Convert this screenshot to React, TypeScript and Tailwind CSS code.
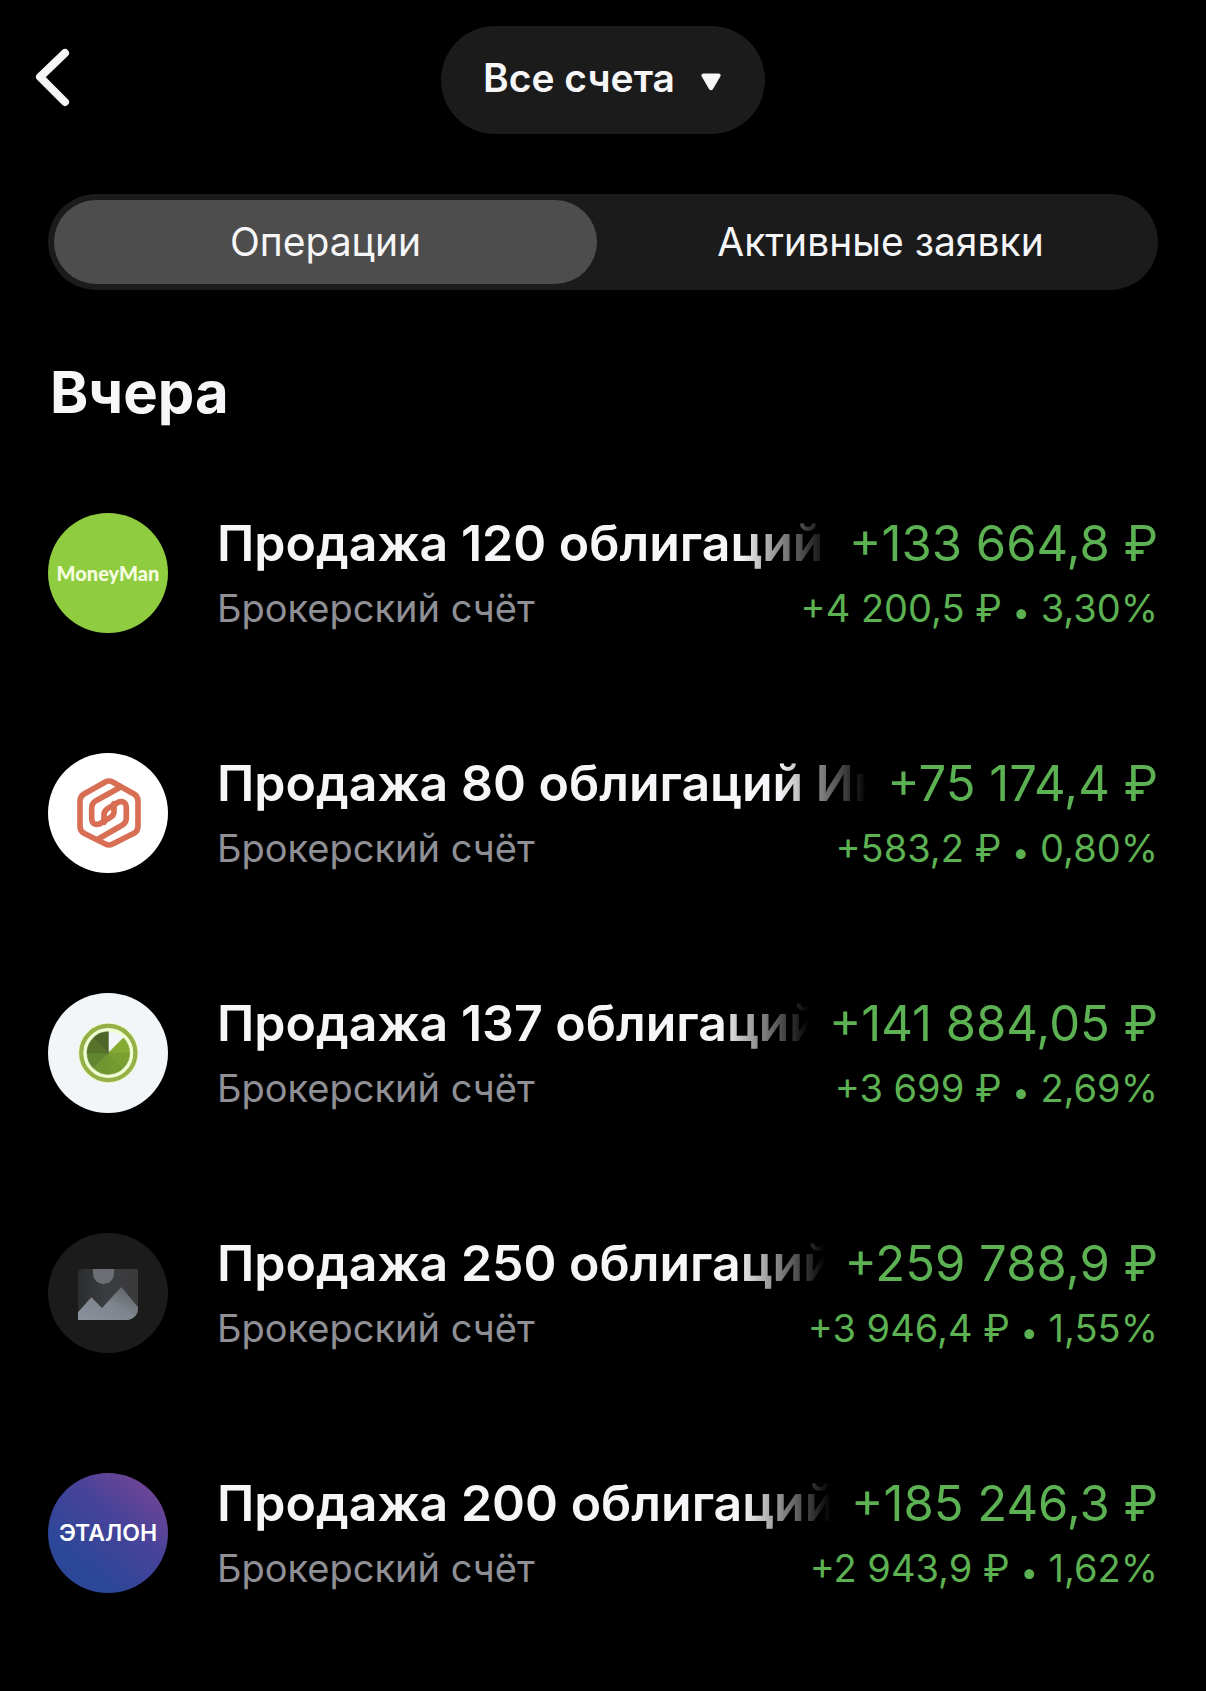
import React, { useState } from "react"

interface Operation {
  id: string;
  title: string;
  account: string;
  amount: string;
  profit: string;
  percent: string;
  logo: React.ReactNode;
}

const MoneyManLogo = () => (
  <div className="flex size-full items-center justify-center bg-[#8fcc3f]">
    <span className="font-['Lato'] text-[20px] font-black leading-none text-[#f6fde0]">MoneyMan</span>
  </div>
)

const HexagonLogo = () => (
  <svg viewBox="0 0 360 360" className="size-full bg-white" fill="none" stroke="#d86f55" strokeWidth="17" strokeLinecap="round" strokeLinejoin="round" aria-hidden="true">
    <path d="M172 87Q183 81 194 87L258 123Q270 130 270 144V220Q270 234 258 241L194 273Q183 279 172 273L108 241Q96 234 96 220V144Q96 130 108 123Z" />
    <path d="M214 104L144 143Q131 151 131 166V194Q131 219 154 213L186 194Q198 187 198 176V152" />
    <path d="M152 257L222 217Q235 209 235 194V166Q235 141 212 147L180 166Q168 173 168 184V208" />
  </svg>
)

const sectors = [
  { color: "#86ab33", angle: 45 },
  { color: "#7ba032", angle: 90 },
  { color: "#739a2f", angle: 135 },
  { color: "#6f962f", angle: 180 },
  { color: "#618530", angle: 225 },
  { color: "#567329", angle: 270 },
  { color: "#4d6627", angle: 315 },
]

const PieLogo = () => (
  <svg viewBox="0 0 360 360" className="size-full bg-[#f3f6f8]" aria-hidden="true">
    <circle cx="181" cy="180" r="90" fill="#e6f5b5" />
    <circle cx="181" cy="180" r="81" fill="#f3f6f8" stroke="#95b048" strokeWidth="13" />
    <circle cx="181" cy="180" r="70" fill="none" stroke="#efffcf" strokeWidth="9" />
    {sectors.map((sector) => (
      <path key={sector.angle} d="M181 180V116A64 64 0 0 1 226 135Z" fill={sector.color} stroke={sector.color} strokeWidth="2" transform={`rotate(${sector.angle} 181 180)`} />
    ))}
  </svg>
)

const PlaceholderLogo = () => (
  <svg viewBox="0 0 360 360" className="size-full bg-[#1b1b1c]" aria-hidden="true">
    <defs>
      <linearGradient id="sky" x1="0" y1="0" x2="1" y2="0">
        <stop offset="0" stopColor="#2b2d2f" />
        <stop offset="0.5" stopColor="#3b3d40" />
        <stop offset="1" stopColor="#3a3a3b" />
      </linearGradient>
      <linearGradient id="hills" x1="0" y1="1" x2="1" y2="0">
        <stop offset="0" stopColor="#8a919b" />
        <stop offset="0.5" stopColor="#80868f" />
        <stop offset="1" stopColor="#5a5c60" />
      </linearGradient>
    </defs>
    <path d="M106 108H270V226A34 34 0 0 1 236 261H90V124Q90 108 106 108Z" fill="url(#sky)" />
    <path d="M135 108H198V122A31 31 0 0 1 135 122Z" fill="#6b6e72" />
    <path d="M90 238L130 193L162 225L220 162L270 222V226A34 34 0 0 1 236 261H90Z" fill="url(#hills)" />
  </svg>
)

const EtalonLogo = () => (
  <div className="flex size-full items-center justify-center bg-[linear-gradient(40deg,#2c4798_25%,#47439a_60%,#7a4593_95%)]">
    <span className="font-['Inter'] text-[23px] font-semibold leading-none text-white">ЭТАЛОН</span>
  </div>
)

const account = "Брокерский счёт"

const operations: Operation[] = [
  { id: "moneyman", title: "Продажа 120 облигаций", account, amount: "+133 664,8 ₽", profit: "+4 200,5 ₽", percent: "3,30%", logo: <MoneyManLogo /> },
  { id: "hexagon", title: "Продажа 80 облигаций Ин", account, amount: "+75 174,4 ₽", profit: "+583,2 ₽", percent: "0,80%", logo: <HexagonLogo /> },
  { id: "pie", title: "Продажа 137 облигаций", account, amount: "+141 884,05 ₽", profit: "+3 699 ₽", percent: "2,69%", logo: <PieLogo /> },
  { id: "placeholder", title: "Продажа 250 облигаций", account, amount: "+259 788,9 ₽", profit: "+3 946,4 ₽", percent: "1,55%", logo: <PlaceholderLogo /> },
  { id: "etalon", title: "Продажа 200 облигаций", account, amount: "+185 246,3 ₽", profit: "+2 943,9 ₽", percent: "1,62%", logo: <EtalonLogo /> },
]

const tabs = ["Операции", "Активные заявки"]

const OperationRow: React.FC<{ operation: Operation }> = ({ operation }) => {
  return (
    <li className="flex items-start gap-[49px] py-[60px]">
      <div className="size-[120px] shrink-0 overflow-hidden rounded-full">{operation.logo}</div>
      <div className="flex h-[120px] min-w-0 flex-1 flex-col gap-1">
        <div className="flex items-baseline gap-5 text-[50px] leading-[60px]">
          <p className="min-w-0 flex-1 overflow-hidden whitespace-nowrap font-semibold [mask-image:linear-gradient(to_left,transparent,black_88px)]">{operation.title}</p>
          <p className="shrink-0 whitespace-nowrap text-[49px] text-[#5cb152]">{operation.amount}</p>
        </div>
        <div className="flex justify-between gap-6 text-[38px] leading-[60px]">
          <p className="text-[#8f9096]">{operation.account}</p>
          <p className="whitespace-nowrap text-[#5cb152]">
            {operation.profit} <span className="align-middle text-[31px] leading-none">•</span> {operation.percent}
          </p>
        </div>
      </div>
    </li>
  )
}

export default function App() {
  const [activeTab, setActiveTab] = useState(0)

  return (
    <main className="min-h-screen bg-black px-12 pb-9 font-['Inter',sans-serif] text-[#f6f6f8]">
      <header className="grid grid-cols-[1fr_auto_1fr] items-center pt-[26px]">
        <button type="button" aria-label="Назад" className="-ml-4 w-12">
          <svg viewBox="0 0 48 68" className="h-[68px] w-12" fill="none" stroke="currentColor" strokeWidth="8" strokeLinecap="round" strokeLinejoin="round" aria-hidden="true">
            <path d="M33 7L8 31L33 56" />
          </svg>
        </button>
        <button type="button" className="flex h-[108px] items-center gap-[26px] rounded-full bg-[#1b1b1c] pl-[42px] pr-11 text-[39px] font-semibold">
          <span className="pb-1">Все счета</span>
          <svg viewBox="0 0 20 18" className="mt-1 h-[18px] w-5" fill="currentColor" aria-hidden="true">
            <path d="M2.500 0.500H17.500Q20.500 0.500 19.300 3.500L12 16Q10 18.500 8 16L0.700 3.500Q-0.500 0.500 2.500 0.500Z" />
          </svg>
        </button>
      </header>

      <div role="tablist" className="mt-[60px] grid h-24 grid-cols-2 gap-3 rounded-full bg-[#1b1b1c] p-1.5">
        {tabs.map((tab, index) => (
          <button
            key={tab}
            type="button"
            role="tab"
            aria-selected={activeTab === index}
            onClick={() => setActiveTab(index)}
            className={`rounded-full text-[39px] ${activeTab === index ? "bg-[#4d4d4d]" : ""}`}
          >
            {tab}
          </button>
        ))}
      </div>

      <h1 className="mt-[66px] pl-0.5 text-[58px] font-bold leading-[72px]">Вчера</h1>

      <ul className="mt-[25px]">
        {operations.map((operation) => (
          <OperationRow key={operation.id} operation={operation} />
        ))}
      </ul>
    </main>
  )
}
